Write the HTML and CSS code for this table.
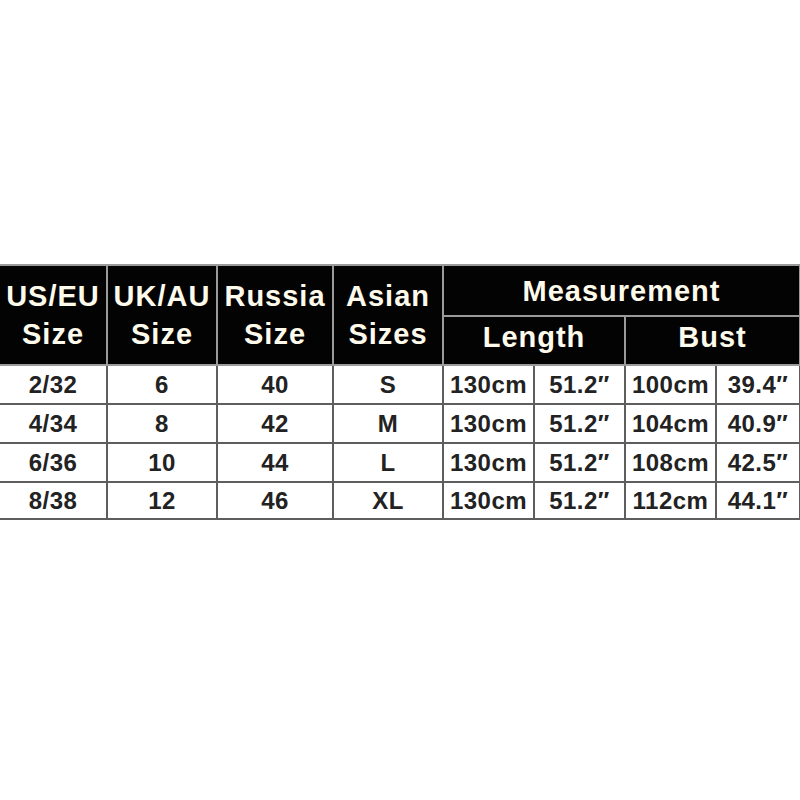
FILE: index.html
```html
<!DOCTYPE html>
<html>
<head>
<meta charset="utf-8">
<link rel="stylesheet" href="styles.css">
</head>
<body>
<div class="page">
<table class="chart">
  <colgroup>
    <col class="c1"><col class="c2"><col class="c3"><col class="c4">
    <col class="c5"><col class="c6"><col class="c7"><col class="c8">
  </colgroup>
  <thead>
    <tr class="h1">
      <th rowspan="2" class="first">US/EU<br>Size</th>
      <th rowspan="2">UK/AU<br>Size</th>
      <th rowspan="2">Russia<br>Size</th>
      <th rowspan="2">Asian<br>Sizes</th>
      <th colspan="4">Measurement</th>
    </tr>
    <tr class="h2">
      <th colspan="2" class="sub">Length</th>
      <th colspan="2" class="sub">Bust</th>
    </tr>
  </thead>
  <tbody>
    <tr><td class="first">2/32</td><td>6</td><td>40</td><td>S</td><td>130cm</td><td>51.2″</td><td>100cm</td><td>39.4″</td></tr>
    <tr><td class="first">4/34</td><td>8</td><td>42</td><td>M</td><td>130cm</td><td>51.2″</td><td>104cm</td><td>40.9″</td></tr>
    <tr><td class="first">6/36</td><td>10</td><td>44</td><td>L</td><td>130cm</td><td>51.2″</td><td>108cm</td><td>42.5″</td></tr>
    <tr class="last"><td class="first">8/38</td><td>12</td><td>46</td><td>XL</td><td>130cm</td><td>51.2″</td><td>112cm</td><td>44.1″</td></tr>
  </tbody>
</table>
</div>
</body>
</html>
```

FILE: styles.css
```css
html, body {
  margin: 0;
  padding: 0;
  background: #ffffff;
}

.page {
  padding-top: 264px;
}

.chart {
  width: 800px;
  table-layout: fixed;
  border-collapse: collapse;
  font-family: "Liberation Sans", Arial, sans-serif;
  font-weight: bold;
}

.c1 { width: 107px; }
.c2 { width: 110px; }
.c3 { width: 116px; }
.c4 { width: 110px; }
.c5 { width: 91px; }
.c6 { width: 91px; }
.c7 { width: 91px; }
.c8 { width: 84px; }

.chart th {
  background: #030303;
  color: #fffbec;
  border: 2px solid #9a9a9a;
  font-size: 29px;
  letter-spacing: 1px;
  line-height: 38px;
  padding: 0;
  text-align: center;
  vertical-align: middle;
  white-space: nowrap;
  overflow: hidden;
}

.h1 { height: 51px; }
.h2 { height: 49px; }

.chart th.sub {
  padding-bottom: 8px;
}

.chart td {
  border: 2px solid #5e5e5e;
  color: #222222;
  font-size: 24px;
  letter-spacing: 0.5px;
  height: 37px;
  padding: 0;
  text-align: center;
  vertical-align: middle;
  white-space: nowrap;
  overflow: hidden;
}

.chart .last td {
  height: 35px;
}

.chart .first {
  border-left: none;
}
```
